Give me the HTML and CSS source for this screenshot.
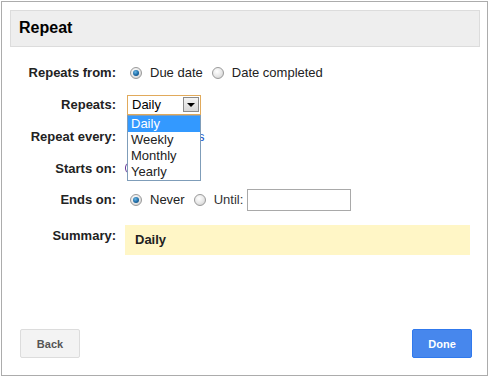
FILE: index.html
```html
<!DOCTYPE html>
<html lang="en">
<head>
    <meta charset="UTF-8">
    <title>Repeat</title>
    <link rel="stylesheet" href="styles.css">
</head>
<body>
    <div class="dialog">
        <div class="dialog-title">Repeat</div>

        <div class="form">
            <div class="row">
                <div class="label">Repeats from:</div>
                <div class="control">
                    <span class="radio checked"></span><span class="opt">Due date</span>
                    <span class="radio"></span><span class="opt">Date completed</span>
                </div>
            </div>

            <div class="row">
                <div class="label">Repeats:</div>
                <div class="control">
                    <div class="select">
                        <div class="select-box">
                            <span>Daily</span>
                            <span class="select-btn"><span class="arrow"></span></span>
                        </div>
                        <!-- open dropdown list -->
                        <ul class="select-list">
                            <li class="active">Daily</li>
                            <li>Weekly</li>
                            <li>Monthly</li>
                            <li>Yearly</li>
                        </ul>
                    </div>
                </div>
            </div>

            <div class="row">
                <div class="label">Repeat every:</div>
                <div class="control">
                    <span class="small-box"></span><span class="unit">days</span>
                </div>
            </div>

            <div class="row">
                <div class="label">Starts on:</div>
                <div class="control">
                    <span class="date-box"></span>
                </div>
            </div>

            <div class="row">
                <div class="label">Ends on:</div>
                <div class="control">
                    <span class="radio checked"></span><span class="opt">Never</span>
                    <span class="radio"></span><span class="opt until">Until:</span>
                    <input type="text" class="until-input">
                </div>
            </div>

            <div class="row summary-row">
                <div class="label">Summary:</div>
                <div class="summary">Daily</div>
            </div>
        </div>

        <div class="footer">
            <button class="btn">Back</button>
            <button class="btn btn-primary">Done</button>
        </div>
    </div>
</body>
</html>
```

FILE: styles.css
```css
body {
    margin: 0;
    background: #fff;
    font-family: "Liberation Sans", Arial, sans-serif;
    color: #222;
}

.dialog {
    margin: 1px;
    width: 487px;
    height: 375px;
    box-sizing: border-box;
    border: 1px solid #acacac;
    padding: 8px 7px 17px 8px;
    display: flex;
    flex-direction: column;
}

.dialog-title {
    height: 37px;
    box-sizing: border-box;
    background: #eeeeee;
    border: 1px solid #dcdcdc;
    padding-left: 8px;
    font-size: 16px;
    font-weight: bold;
    color: #000;
    line-height: 34px;
}

.form {
    margin-top: 10px;
}

.row {
    display: flex;
    align-items: center;
    height: 31.75px;
}

.label {
    width: 106px;
    margin-right: 11px;
    text-align: right;
    font-size: 13px;
    font-weight: bold;
    color: #222;
    flex-shrink: 0;
}

.control {
    display: flex;
    align-items: center;
    font-size: 13px;
}

.radio {
    width: 10px;
    height: 10px;
    border-radius: 50%;
    border: 1px solid #9a9a9a;
    background: radial-gradient(circle at 40% 35%, #fff 0%, #e6e6e6 55%, #c8c8c8 100%);
    margin: 0 8px 0 3px;
    position: relative;
    flex-shrink: 0;
}

.radio.checked::after {
    content: "";
    position: absolute;
    left: 2px;
    top: 2px;
    width: 6px;
    height: 6px;
    border-radius: 50%;
    background: radial-gradient(circle at 40% 35%, #6ab8e6 0%, #1c6aa5 55%, #0b3c66 100%);
}

.opt {
    margin-right: 6px;
    color: #222;
}

.until {
    margin-right: 4px;
    color: #333;
}

.until-input {
    width: 104px;
    height: 22px;
    box-sizing: border-box;
    border: 1px solid #a9a9a9;
    margin: 0;
    padding: 0;
}

.select {
    position: relative;
}

.select-box {
    width: 74px;
    height: 20px;
    box-sizing: border-box;
    border: 1px solid #e1aa5b;
    display: flex;
    align-items: center;
    justify-content: space-between;
    padding: 0 1px 0 4px;
    font-size: 13px;
    color: #000;
}

.select-btn {
    width: 16px;
    height: 15px;
    box-sizing: border-box;
    border: 1px solid #8a8a8a;
    background: linear-gradient(#f4f4f4, #d8d8d8);
    display: flex;
    align-items: center;
    justify-content: center;
}

.arrow {
    width: 0;
    height: 0;
    border-left: 4px solid transparent;
    border-right: 4px solid transparent;
    border-top: 4px solid #000;
}

.select-list {
    position: absolute;
    left: 0;
    top: 20px;
    width: 74px;
    box-sizing: border-box;
    margin: 0;
    padding: 0;
    list-style: none;
    background: #fff;
    border: 1px solid #7f9db9;
    font-size: 13px;
    z-index: 2;
}

.select-list li {
    height: 16px;
    line-height: 16px;
    padding-left: 3px;
    color: #222;
}

.select-list li.active {
    background: #3399ff;
    color: #fff;
}

.small-box {
    width: 44px;
    height: 18px;
    border: 1px solid #aaa;
    margin-right: 4px;
}

.unit {
    color: #1155cc;
}

.date-box {
    width: 60px;
    height: 8px;
    margin-left: -2px;
    border: 1px solid #6a3d9a;
    border-radius: 4px;
}

.summary-row {
    align-items: flex-start;
    height: auto;
    margin-top: 9px;
}

.summary-row .label {
    padding-top: 3px;
}

.summary {
    width: 345px;
    height: 30px;
    box-sizing: border-box;
    margin-left: -2px;
    background: #fff6c6;
    padding-left: 10px;
    font-size: 13px;
    font-weight: bold;
    color: #222;
    line-height: 30px;
}

.footer {
    margin-top: auto;
    display: flex;
    justify-content: space-between;
    padding: 0 8px 0 10px;
}

.btn {
    width: 60px;
    height: 29px;
    box-sizing: border-box;
    border: 1px solid #dcdcdc;
    border-radius: 2px;
    background: #f3f3f3;
    color: #555;
    font-family: "Liberation Sans", Arial, sans-serif;
    font-size: 11px;
    font-weight: bold;
    padding: 0;
}

.btn-primary {
    background: #4787ed;
    border-color: #3079ed;
    color: #fff;
}
```
